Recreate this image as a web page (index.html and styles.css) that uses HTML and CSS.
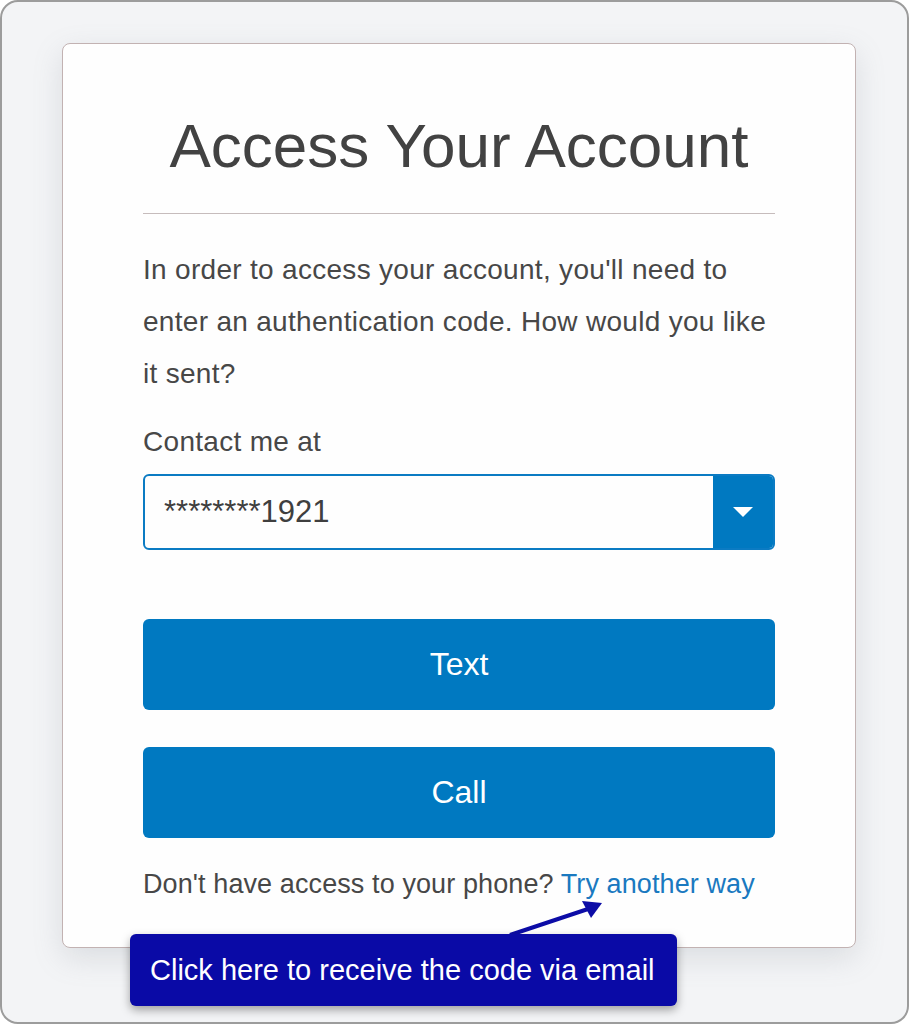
FILE: index.html
```html
<!DOCTYPE html>
<html lang="en">
<head>
    <meta charset="UTF-8">
    <meta name="viewport" content="width=device-width, initial-scale=1.0">
    <title>Access Your Account</title>
    <link rel="stylesheet" href="styles.css">
</head>
<body>
    <div class="frame">
        <div class="card">
            <h1>Access Your Account</h1>
            <hr class="divider">
            <p class="intro">In order to access your account, you'll need to enter an authentication code. How would you like it sent?</p>
            <label class="label" for="contact">Contact me at</label>
            <div class="select" id="contact">
                <span class="select-value">********1921</span>
                <span class="select-toggle"><span class="caret"></span></span>
            </div>
            <button class="btn">Text</button>
            <button class="btn">Call</button>
            <p class="alt">Don't have access to your phone? <a href="#" class="link">Try another way</a></p>
        </div>

        <!-- annotation over the card -->
        <svg class="pointer" width="120" height="50" viewBox="0 0 120 50">
            <line x1="6" y1="42" x2="90" y2="14" stroke="#0c0ca6" stroke-width="4"/>
            <polygon points="98,10 78,8 87,25" fill="#0c0ca6"/>
        </svg>
        <div class="callout">Click here to receive the code via email</div>
    </div>
</body>
</html>
```

FILE: styles.css
```css
body {
    margin: 0;
    font-family: "Liberation Sans", Arial, sans-serif;
    background: #ffffff;
}
.frame {
    position: relative;
    box-sizing: border-box;
    width: 909px;
    height: 1024px;
    padding: 41px 0 0 60px;
    border: 2px solid #9c9c9c;
    border-radius: 18px;
    background: #f3f4f6;
}
.card {
    box-sizing: border-box;
    display: flex;
    flex-direction: column;
    width: 794px;
    height: 905px;
    padding: 70px 80px 0;
    background: #fefefe;
    border: 1px solid #c2b2b2;
    border-radius: 8px;
    box-shadow: 0 10px 30px rgba(120, 130, 140, 0.2);
}
h1 {
    margin: 0 0 35px;
    font-size: 62px;
    line-height: 64px;
    font-weight: normal;
    text-align: center;
    color: #424242;
}
.divider {
    width: 100%;
    margin: 0 0 30px;
    border: none;
    border-top: 1px solid #c6bcbc;
}
.intro {
    margin: 0;
    font-size: 28px;
    line-height: 52px;
    letter-spacing: 0.3px;
    color: #474747;
}
.label {
    margin-top: 16px;
    font-size: 28px;
    line-height: 52px;
    letter-spacing: 0.3px;
    color: #474747;
}
.select {
    box-sizing: border-box;
    display: flex;
    align-items: stretch;
    height: 76px;
    margin-top: 6px;
    border: 2px solid #0b7bc3;
    border-radius: 6px;
    overflow: hidden;
}
.select-value {
    flex: 1;
    display: flex;
    align-items: center;
    padding-left: 19px;
    font-size: 31px;
    color: #3f3f3f;
}
.select-toggle {
    display: flex;
    align-items: center;
    justify-content: center;
    width: 60px;
    background: #0079c1;
}
.caret {
    width: 0;
    height: 0;
    border-left: 10px solid transparent;
    border-right: 10px solid transparent;
    border-top: 10px solid #ffffff;
}
.btn {
    height: 91px;
    margin-top: 69px;
    border: none;
    border-radius: 6px;
    background: #0079c1;
    color: #ffffff;
    font-family: inherit;
    font-size: 32px;
    cursor: pointer;
}
.btn + .btn {
    margin-top: 37px;
}
.alt {
    margin: 31px 0 0;
    font-size: 27px;
    line-height: 30px;
    letter-spacing: 0.1px;
    color: #474747;
}
.link {
    color: #1a79c0;
    text-decoration: none;
}
.pointer {
    position: absolute;
    left: 502px;
    top: 891px;
}
.callout {
    position: absolute;
    left: 128px;
    top: 932px;
    box-sizing: border-box;
    width: 547px;
    height: 72px;
    padding-left: 20px;
    display: flex;
    align-items: center;
    background: #0a0aa6;
    border-radius: 6px;
    box-shadow: 0 4px 10px rgba(0, 0, 0, 0.35);
    color: #ffffff;
    font-size: 29px;
}
```
